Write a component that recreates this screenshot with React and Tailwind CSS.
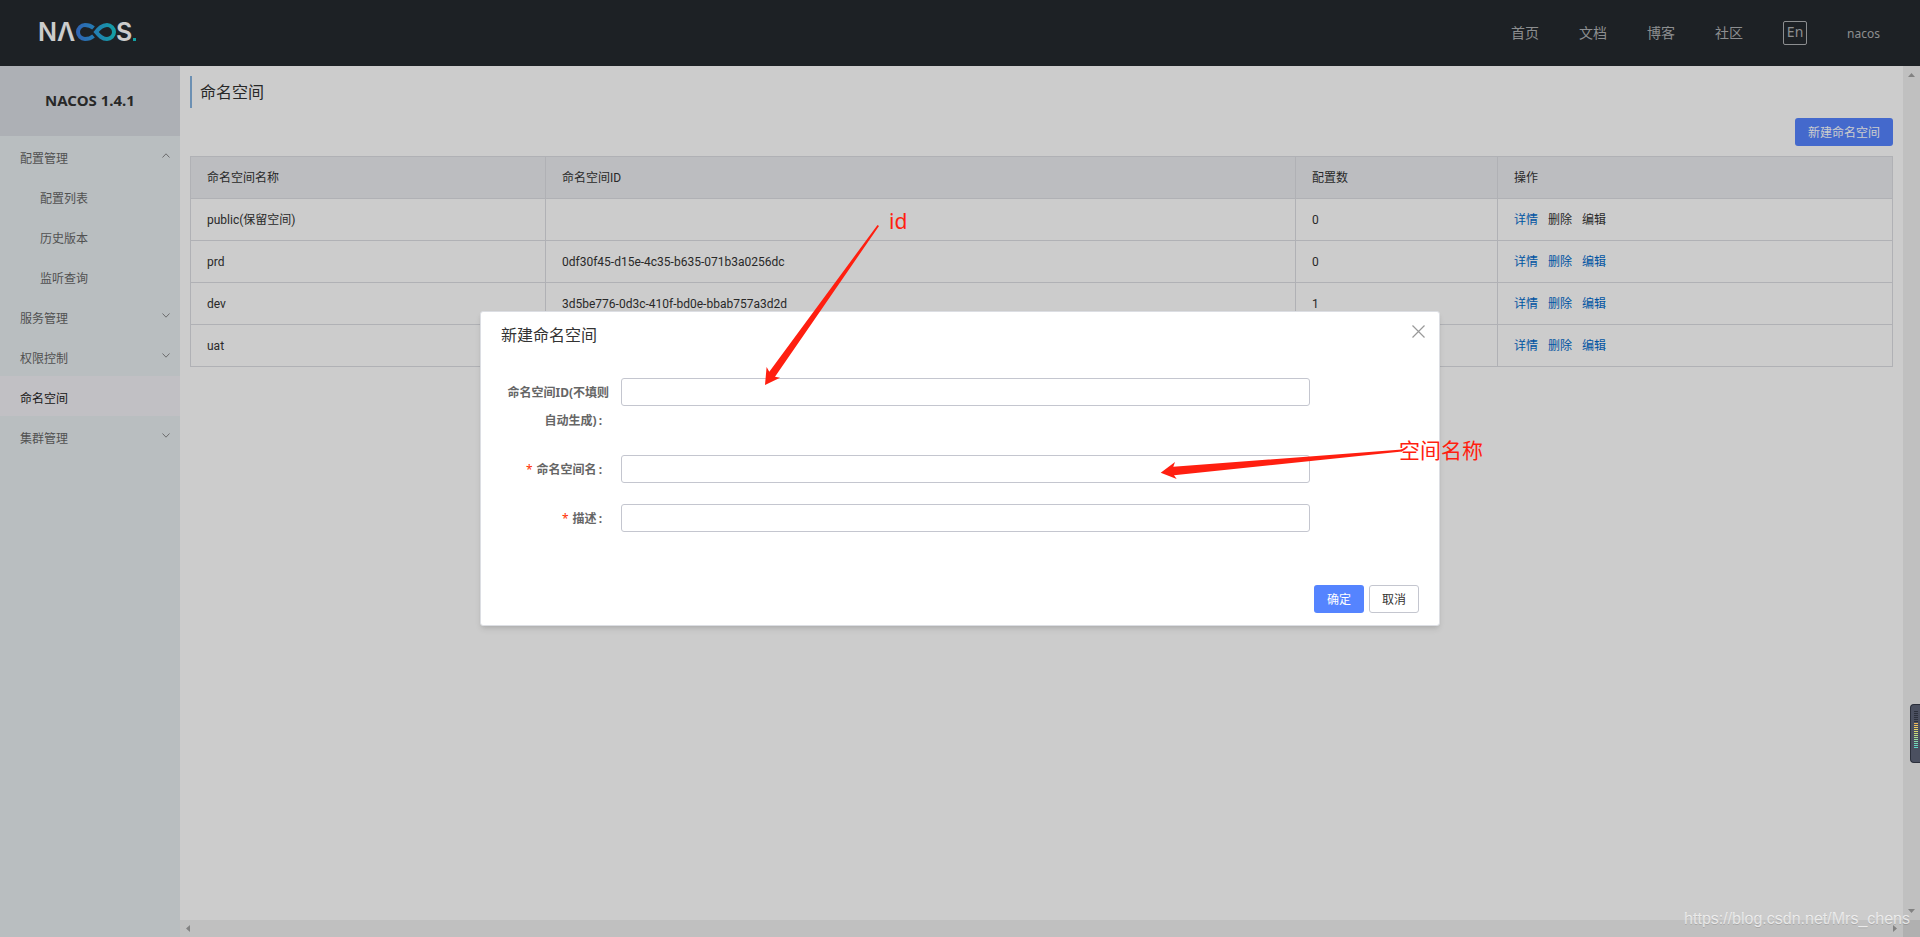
import { useState } from "react";

const NAV_LINKS = ["首页", "文档", "博客", "社区"];

const MENU = [
  { label: "配置管理", open: true, children: ["配置列表", "历史版本", "监听查询"] },
  { label: "服务管理", children: [] },
  { label: "权限控制", children: [] },
  { label: "命名空间", active: true },
  { label: "集群管理", children: [] },
];

const NAMESPACES = [
  { name: "public(保留空间)", id: "", count: 0, reserved: true },
  { name: "prd", id: "0df30f45-d15e-4c35-b635-071b3a0256dc", count: 0 },
  { name: "dev", id: "3d5be776-0d3c-410f-bd0e-bbab757a3d2d", count: 1 },
  { name: "uat", id: "", count: 0 },
];

const METER = [
  "#2c303c", "#2c303c", "#2c303c", "#2c303c", "#2c303c", "#2c303c",
  "#f0b95a", "#efc45c", "#eccd60", "#e6d466", "#dad96e", "#cbdb78",
  "#bcdc84", "#aadc90", "#98dc9e", "#86dbaa", "#76dab6", "#68d9c0", "#5cd8c8",
];

function Logo() {
  return (
    <svg width="108" height="36" viewBox="-4 -6 108 36" role="img" aria-label="NACOS.">
      <defs>
        <linearGradient id="loop" x1="36" y1="0" x2="76" y2="0" gradientUnits="userSpaceOnUse">
          <stop offset="0" stopColor="#3c7be0" />
          <stop offset="0.5" stopColor="#2c9fe0" />
          <stop offset="1" stopColor="#16c8cc" />
        </linearGradient>
      </defs>
      <g fill="#fff" fontFamily="Inter, sans-serif" fontSize="25" fontWeight="600">
        <text x="-2" y="21">N</text>
        <text x="17" y="21">Λ</text>
        <text x="76" y="21">S</text>
      </g>
      <g fill="none" stroke="url(#loop)" strokeWidth="4">
        <path d="M53.500 8C51 5.800 48.500 5 45 5A7 7 0 0 0 45 19C48.500 19 51 18.200 53.500 16" />
        <path d="M56 12C59 8.500 62 5 67 5A7 7 0 0 1 67 19C62 19 59 15.500 56 12Z" />
      </g>
      <rect x="93" y="18" width="3" height="3" fill="#16c8cc" />
    </svg>
  );
}

function Chevron({ up }) {
  return (
    <svg width="8" height="5" viewBox="0 0 8 5" fill="none" stroke="#888" className="mb-2">
      <path d={up ? "M0.500 4.500L4 0.800L7.500 4.500" : "M0.500 0.500L4 4.200L7.500 0.500"} />
    </svg>
  );
}

function Header() {
  return (
    <header className="flex h-[66px] shrink-0 items-center justify-between bg-[#252a2f] px-10 text-sm text-[#b0b2b4]">
      <a href="#home" className="-ml-1 pb-0.5">
        <Logo />
      </a>
      <nav className="flex items-center gap-10">
        {NAV_LINKS.map((link) => (
          <a key={link} href="#nav">{link}</a>
        ))}
        <button className="h-6 w-6 rounded-xs border border-[#b0b2b4] pb-0.5 leading-5">En</button>
        <a href="#user" className="pt-0.5 text-xs">nacos</a>
      </nav>
    </header>
  );
}

function Sidebar() {
  return (
    <aside className="w-[180px] shrink-0 bg-[#e8eef1] text-xs text-[#666]">
      <div className="flex h-[70px] items-center justify-center bg-[#d9dde3] pb-0.5 text-[15px] font-bold text-[#333]">
        NACOS 1.4.1
      </div>
      <ul>
        {MENU.map((item) => (
          <li key={item.label}>
            <a
              href="#menu"
              className={
                item.active
                  ? "flex h-10 items-center justify-between bg-[#f2f0f6] pt-1.5 pr-2.5 pl-5 text-[#222]"
                  : "flex h-10 items-center justify-between pt-1.5 pr-2.5 pl-5"
              }
            >
              {item.label}
              {item.children && <Chevron up={item.open} />}
            </a>
            {item.open &&
              item.children.map((child) => (
                <a key={child} href="#menu" className="flex h-10 items-center pt-1.5 pl-10">
                  {child}
                </a>
              ))}
          </li>
        ))}
      </ul>
    </aside>
  );
}

function NamespaceTable() {
  return (
    <table className="mt-2.5 w-full table-fixed border-collapse text-left font-['Roboto','Noto_Sans_CJK_SC',sans-serif] text-xs text-[#333]">
      <thead>
        <tr className="h-[42px] bg-[#ebedf1]">
          <th className="w-[355px] border border-[#dcdee3] px-4 font-normal">命名空间名称</th>
          <th className="border border-[#dcdee3] px-4 font-normal">命名空间ID</th>
          <th className="w-[202px] border border-[#dcdee3] px-4 font-normal">配置数</th>
          <th className="w-[395px] border border-[#dcdee3] px-4 font-normal">操作</th>
        </tr>
      </thead>
      <tbody>
        {NAMESPACES.map((row) => (
          <tr key={row.name} className="h-[42px]">
            <td className="border border-[#dcdee3] px-4">{row.name}</td>
            <td className="border border-[#dcdee3] px-4">{row.id}</td>
            <td className="border border-[#dcdee3] px-4">{row.count}</td>
            <td className="border border-[#dcdee3] px-4">
              <div className="flex gap-2.5 text-[#006acc]">
                <a href="#detail">详情</a>
                {row.reserved ? <span className="text-[#333]">删除</span> : <a href="#delete">删除</a>}
                {row.reserved ? <span className="text-[#333]">编辑</span> : <a href="#edit">编辑</a>}
              </div>
            </td>
          </tr>
        ))}
      </tbody>
    </table>
  );
}

function Field({ id, label, required, value, onChange }) {
  return (
    <div className="flex h-auto items-start">
      <label htmlFor={id} className="-mb-px w-[120px] shrink-0 pt-px pr-3 text-right leading-7 font-bold text-[#666]">
        {required && <span className="mr-1 font-normal text-[#ff3000]">*</span>}
        {label}
        <span className="mr-[7px] ml-0.5">:</span>
      </label>
      <input
        id={id}
        name={id}
        value={value}
        onChange={onChange}
        className="h-7 w-3/4 rounded-[3px] border border-[#c4c6cf] bg-white px-2 outline-none"
      />
    </div>
  );
}

// Hand-drawn notes laid over the dialog
function Annotations() {
  return (
    <div className="pointer-events-none absolute inset-0 text-[#ff1f10]">
      <svg className="absolute top-[-92px] left-[279px] overflow-visible" width="650" height="270" viewBox="760 220 650 270" fill="#ff1f10">
        <path d="M765 385L766.600 367L769.300 371.700L877.500 225L879 226L775 376.700L780 377.700Z" />
        <path d="M1160.700 472.700L1175 462L1173.300 466.700L1402 449.500L1402 451.500L1174 475.300L1176.700 479Z" />
      </svg>
      <span className="absolute top-[-107px] left-[408px] text-[21px] leading-8">id</span>
      <span className="absolute top-[122px] left-[918px] text-[21px] leading-8 whitespace-nowrap">空间名称</span>
    </div>
  );
}

function NewNamespaceDialog() {
  const [form, setForm] = useState({ namespaceId: "", namespaceName: "", description: "" });

  const handleChange = (e) => setForm({ ...form, [e.target.name]: e.target.value });

  return (
    <div className="absolute inset-0 flex items-center justify-center bg-black/20">
      <div role="dialog" aria-label="新建命名空间" className="relative w-1/2 rounded-[3px] border border-[#dcdee3] bg-white text-xs shadow-md">
        <div className="flex items-start justify-between px-5 pt-[11px] pb-3">
          <h2 className="text-base leading-6 text-[#333]">新建命名空间</h2>
          <button aria-label="关闭" className="-mt-1 -mr-3 p-1.5">
            <svg width="13" height="13" viewBox="0 0 13 13" stroke="#999" strokeWidth="1.200">
              <path d="M0.500 0.500L12.500 12.500M12.500 0.500L0.500 12.500" />
            </svg>
          </button>
        </div>
        <form className="flex flex-col gap-[21px] px-5 pt-[19px] pb-[53px]">
          <Field id="namespaceId" label="命名空间ID(不填则自动生成)" value={form.namespaceId} onChange={handleChange} />
          <Field id="namespaceName" label="命名空间名" required value={form.namespaceName} onChange={handleChange} />
          <Field id="description" label="描述" required value={form.description} onChange={handleChange} />
        </form>
        <div className="flex justify-end gap-[5px] px-5 pb-3">
          <button className="h-7 w-[50px] rounded-[3px] bg-[#5584ff] pt-0.5 text-white">确定</button>
          <button className="h-7 w-[50px] rounded-[3px] border border-[#c4c6cf] pt-0.5 text-[#333]">取消</button>
        </div>
        <Annotations />
      </div>
    </div>
  );
}

function Meter() {
  return (
    <div className="absolute top-[704px] right-0 flex h-[59px] w-2.5 flex-col gap-px rounded-l-[4px] border border-r-0 border-[#2b2f3b] bg-[#4b5060] pt-1.5 pl-[3px]">
      {METER.map((color, i) => (
        <div key={i} className="h-px w-1 shrink-0" style={{ backgroundColor: color }} />
      ))}
    </div>
  );
}

export default function App() {
  return (
    <div className="relative flex h-screen flex-col overflow-hidden bg-white font-['Noto_Sans','Noto_Sans_CJK_SC',sans-serif]">
      <Header />
      <div className="flex min-h-0 flex-1">
        <Sidebar />
        <div className="flex min-w-0 flex-1 flex-col">
          <div className="flex min-h-0 flex-1">
            <main className="min-w-0 flex-1 p-2.5">
              <h1 className="h-8 border-l-2 border-[#87b5e0] pl-2 text-base leading-8 text-[#333]">命名空间</h1>
              <div className="mt-2.5 flex justify-end">
                <button className="h-7 rounded-[3px] bg-[#5584ff] px-[13px] pt-0.5 text-xs text-white">新建命名空间</button>
              </div>
              <NamespaceTable />
            </main>
            <div className="flex w-[17px] shrink-0 flex-col items-center justify-between bg-[#f1f1f1] py-[7px]">
              <svg width="7" height="4" fill="#a3a3a3"><path d="M0 4L3.500 0L7 4Z" /></svg>
              <svg width="7" height="4" fill="#a3a3a3"><path d="M0 0L3.500 4L7 0Z" /></svg>
            </div>
          </div>
          <div className="flex h-[17px] shrink-0 bg-[#dcdcdc]">
            <div className="flex flex-1 items-center justify-between bg-[#f1f1f1] px-1.5">
              <svg width="4" height="7" fill="#a3a3a3"><path d="M4 0L0 3.500L4 7Z" /></svg>
              <svg width="4" height="7" fill="#a3a3a3"><path d="M0 0L4 3.500L0 7Z" /></svg>
            </div>
            <div className="w-[17px]" />
          </div>
        </div>
      </div>
      <NewNamespaceDialog />
      <Meter />
      <div className="absolute right-2.5 bottom-1.5 font-['Liberation_Sans',sans-serif] text-base leading-6 text-white/70 text-shadow-2xs">
        https://blog.csdn.net/Mrs_chens
      </div>
    </div>
  );
}
